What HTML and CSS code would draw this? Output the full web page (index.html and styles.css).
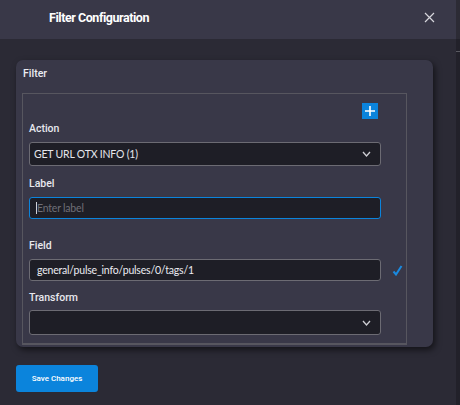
FILE: index.html
```html
<!DOCTYPE html>
<html lang="en">

<head>
    <meta charset="UTF-8">
    <title>Filter Configuration</title>
    <link rel="stylesheet" href="styles.css">
</head>

<body>
    <div class="dialog">
        <!-- Header -->
        <div class="dialog-header">
            <h1>Filter Configuration</h1>
            <svg class="close" width="11" height="11" viewBox="0 0 11 11">
                <path d="M1 1L10 10M10 1L1 10" stroke="#d6d6dc" stroke-width="1.2" fill="none" />
            </svg>
        </div>

        <!-- Body -->
        <div class="dialog-body">
            <div class="card">
                <div class="card-title">Filter</div>
                <div class="group-box">
                    <div class="toolbar">
                        <button class="add-btn" title="Add">
                            <svg width="10" height="10" viewBox="0 0 10 10">
                                <path d="M5 0V10M0 5H10" stroke="#fff" stroke-width="1.6" />
                            </svg>
                        </button>
                    </div>

                    <label class="field-label">Action</label>
                    <div class="control-row">
                        <div class="select tall">
                            <span>GET URL OTX INFO (1)</span>
                            <svg class="chevron" width="9" height="6" viewBox="0 0 9 6">
                                <path d="M1 1L4.5 5L8 1" stroke="#cfcfd4" stroke-width="1.3" fill="none" />
                            </svg>
                        </div>
                    </div>

                    <label class="field-label gap-sm">Label</label>
                    <div class="control-row">
                        <div class="input focused"><span class="caret"></span><span class="placeholder">Enter label</span></div>
                    </div>

                    <label class="field-label gap-lg">Field</label>
                    <div class="control-row">
                        <div class="input"><span class="value">general/pulse_info/pulses/0/tags/1</span></div>
                        <svg class="check" width="11" height="11" viewBox="0 0 11 11">
                            <path d="M1.5 6.5L4 9.5L9.5 1" stroke="#1a8ae0" stroke-width="2" fill="none" />
                        </svg>
                    </div>

                    <label class="field-label gap-xs">Transform</label>
                    <div class="control-row">
                        <div class="select taller">
                            <span></span>
                            <svg class="chevron" width="9" height="6" viewBox="0 0 9 6">
                                <path d="M1 1L4.5 5L8 1" stroke="#cfcfd4" stroke-width="1.3" fill="none" />
                            </svg>
                        </div>
                    </div>
                </div>
            </div>

            <button class="save-btn">Save Changes</button>
        </div>
    </div>

    <!-- Right edge strip -->
    <div class="edge">
        <div class="edge-top"></div>
        <div class="edge-mark"></div>
    </div>
</body>

</html>
```

FILE: styles.css
```css
/* General styling */
body {
    margin: 0;
    padding: 0;
    width: 460px;
    height: 405px;
    overflow: hidden;
    display: flex;
    background-color: #2b2a35;
    font-family: 'Roboto', 'Liberation Sans', sans-serif;
    color: #e6e6ec;
}

.dialog {
    flex: 1;
    display: flex;
    flex-direction: column;
}

/* Header */
.dialog-header {
    height: 39px;
    background-color: #393848;
    display: flex;
    align-items: center;
    padding: 0 0 4px 49px;
    box-sizing: border-box;
}

.dialog-header h1 {
    margin: 0;
    font-size: 12.5px;
    font-weight: 700;
    letter-spacing: -0.45px;
    color: #ffffff;
    flex: 1;
}

.close {
    margin-right: 21px;
}

/* Body */
.dialog-body {
    padding: 21px 0 0 16px;
}

.card {
    width: 417px;
    height: 287px;
    box-sizing: border-box;
    background-color: #393848;
    border-radius: 7px;
    padding: 6px 0 0 6px;
    box-shadow: 2px 3px 6px rgba(0, 0, 0, 0.55);
}

.card-title {
    font-size: 10.5px;
    font-weight: 500;
    line-height: 14px;
    padding: 1px 0 0 1px;
    color: #ececf2;
}

.group-box {
    margin-top: 12px;
    width: 385px;
    height: 252px;
    box-sizing: border-box;
    border: 1px solid #57565f;
    border-bottom-width: 2px;
    padding: 9px 0 0 6px;
}

.toolbar {
    display: flex;
    justify-content: flex-end;
    padding-right: 28px;
}

.add-btn {
    width: 16px;
    height: 16px;
    padding: 0;
    border: none;
    background-color: #0b84dc;
    display: flex;
    align-items: center;
    justify-content: center;
    cursor: pointer;
}

/* Form elements */
.field-label {
    display: block;
    font-size: 10.5px;
    font-weight: 500;
    line-height: 14px;
    margin: 3px 0 6px 0;
    color: #e8e8ee;
}

.field-label.gap-sm {
    margin-top: 11px;
}

.field-label.gap-lg {
    margin-top: 20px;
}

.field-label.gap-xs {
    margin-top: 10px;
    margin-bottom: 5px;
}

.control-row {
    display: flex;
    align-items: center;
}

.select,
.input {
    width: 352px;
    height: 22px;
    box-sizing: border-box;
    background-color: #1e1e26;
    border: 1px solid #6c6b73;
    border-radius: 3px;
    display: flex;
    align-items: center;
    font-family: 'Lato', 'Noto Sans', sans-serif;
    font-size: 10.5px;
    letter-spacing: -0.2px;
}

.select.tall {
    height: 24px;
}

.select.taller {
    height: 25px;
}

.select {
    padding: 0 9px 0 4px;
    justify-content: space-between;
}

.input {
    padding: 0 7px;
}

.input.focused {
    border-color: #0b84dc;
}

.caret {
    width: 1px;
    height: 12px;
    background-color: #d0d0d6;
    margin-left: -1px;
}

.placeholder {
    color: #6f6e77;
}

.value {
    color: #ececf2;
}

.check {
    margin-left: 11px;
}

/* Button styling */
.save-btn {
    margin-top: 18px;
    width: 82px;
    height: 27px;
    border: none;
    border-radius: 3px;
    background-color: #0b84dc;
    color: #ffffff;
    font-family: 'Roboto', 'Liberation Sans', sans-serif;
    font-size: 8px;
    font-weight: 500;
    cursor: pointer;
}

/* Right edge */
.edge {
    width: 4px;
    background-color: #22212a;
}

.edge-top {
    height: 39px;
    background-color: #2c2b35;
}

.edge-mark {
    margin-top: 12px;
    height: 1px;
    background-color: #5a5a62;
}
```
